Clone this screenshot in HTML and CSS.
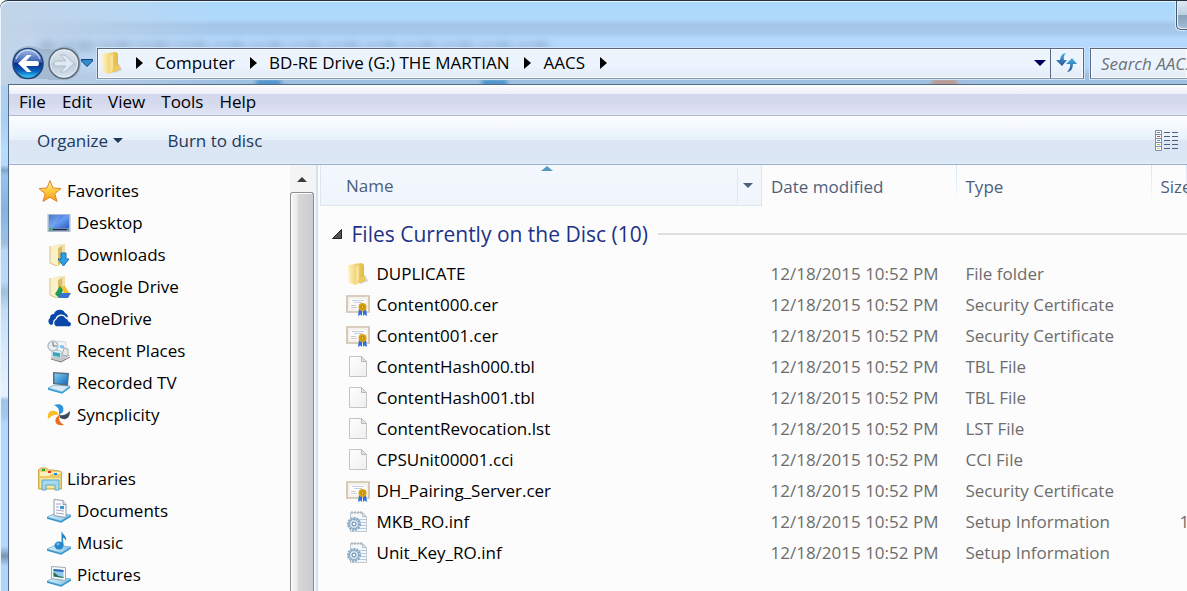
FILE: index.html
```html
<!DOCTYPE html>
<html lang="en">
<head>
<meta charset="utf-8">
<meta name="viewport" content="width=device-width, initial-scale=1">
<title>AACS</title>
<link rel="stylesheet" href="styles.css">
</head>
<body>
<svg class="defs" aria-hidden="true">
  <defs>
    <linearGradient id="gold" x1="0" x2="1"><stop offset="0" stop-color="#fff3bd"/><stop offset="1" stop-color="#ecca62"/></linearGradient>
    <linearGradient id="goldDark" x1="0" x2="1"><stop offset="0" stop-color="#f7df85"/><stop offset="1" stop-color="#e2b840"/></linearGradient>
    <linearGradient id="screen" x1="0" y1="0" x2="1" y2="1"><stop offset="0" stop-color="#2458b8"/><stop offset=".5" stop-color="#6a9df0"/><stop offset="1" stop-color="#2b5fc4"/></linearGradient>
    <linearGradient id="laptopScreen" x1="0" y1="0" x2="1" y2="1"><stop offset="0" stop-color="#7fd0f4"/><stop offset="1" stop-color="#1668bb"/></linearGradient>
    <linearGradient id="tray" x1="0" x2="1"><stop offset="0" stop-color="#d8f0fb"/><stop offset="1" stop-color="#7fc0e6"/></linearGradient>
    <linearGradient id="paper" x1="0" y1="0" x2="1" y2="1"><stop offset="0" stop-color="#ffffff"/><stop offset="1" stop-color="#eeeeee"/></linearGradient>
    <linearGradient id="arrowBlue" x1="0" y1="0" x2="0" y2="1"><stop offset="0" stop-color="#45b4e0"/><stop offset="1" stop-color="#2a4f9c"/></linearGradient>
    <linearGradient id="starFill" x1="0" y1="0" x2="0" y2="1"><stop offset="0" stop-color="#fff2a0"/><stop offset=".5" stop-color="#ffc93c"/><stop offset="1" stop-color="#f59a1c"/></linearGradient>
    <linearGradient id="backFill" x1="0" y1="0" x2="0" y2="1"><stop offset="0" stop-color="#a9bfe6"/><stop offset=".45" stop-color="#3a62b4"/><stop offset=".5" stop-color="#08308c"/><stop offset=".75" stop-color="#0b62bd"/><stop offset="1" stop-color="#3bdcff"/></linearGradient>
    <linearGradient id="fwdFill" x1="0" y1="0" x2="0" y2="1"><stop offset="0" stop-color="#dce4ec"/><stop offset=".48" stop-color="#cad5e0"/><stop offset=".5" stop-color="#bccad8"/><stop offset="1" stop-color="#d6e2ee"/></linearGradient>
  </defs>
  <symbol id="i-folder" viewBox="0 0 24 24">
    <path d="M14 22l8-3-3-6-5 1z" fill="#a9adb4" opacity=".55"/>
    <path d="M7 2l9-1 2 2v16l-7 3-4-2z" fill="url(#goldDark)"/>
    <path d="M2 3l8-1 3 2v14l-3 5-7-2z" fill="url(#gold)"/>
    <path d="M10 5l3-2v15l-3 5z" fill="#f8e293"/>
    <path d="M14 15l5-1v5l-5 2z" fill="#edc95a"/>
  </symbol>
  <symbol id="i-folder-pale" viewBox="0 0 24 24">
    <path d="M8 2l10-1v17l-7 5z" fill="#efdfa6"/>
    <path d="M3 3l9-1 2 2v15l-3 4-7-3z" fill="#fbf1c7"/>
    <path d="M11 5l4-2v15l-4 5z" fill="#d6bb69"/>
    <path d="M3 3v17l7 3" fill="none" stroke="#d7c27b"/>
  </symbol>
  <symbol id="i-star" viewBox="0 0 24 24">
    <path d="M12 1.500l3 7.500 8 .5-6.200 5.200 2.200 7.800-7-4.300-7 4.300 2.200-7.800L1 9.500 9 9z" fill="url(#starFill)" stroke="#e0852a" stroke-linejoin="round"/>
  </symbol>
  <symbol id="i-desktop" viewBox="0 0 24 24">
    <path d="M.5 3h23v18H.5z" fill="#a9bbd2"/><path d="M2 4h20v13H2z" fill="url(#screen)"/>
    <path d="M2 4h12L5 17H2z" fill="#8cb4f5" opacity=".35"/>
    <path d="M2 17h20v3H2z" fill="#7487a3"/><path d="M6 18h14v1H6z" fill="#17284a"/><circle cx="4" cy="18" r="1.500" fill="#4bb26a"/>
  </symbol>
  <symbol id="i-downloads" viewBox="0 0 24 24">
    <use href="#i-folder-pale"/><path d="M14 10h5v6h3l-5.500 7L11 16h3z" fill="#2ea0e2" stroke="#1673b8"/>
  </symbol>
  <symbol id="i-gdrive" viewBox="0 0 24 24">
    <use href="#i-folder-pale"/><path d="M13 11h5l5 8h-5z" fill="#f7c22f"/><path d="M13 11l3 4-4 8L8 19z" fill="#1d9a57"/><path d="M14 18h10l-3 5h-9.500z" fill="#3971d6"/>
  </symbol>
  <symbol id="i-onedrive" viewBox="0 0 24 24">
    <path d="M4 18a4 4 0 0 1-1-7 4 4 0 0 1 4-4 6 6 0 0 1 11-1 5 5 0 0 1 3 4z" fill="#0a47a9"/>
    <path d="M9 20a4.500 4.500 0 0 1 0-8 5.500 5.500 0 0 1 10-1 4 4 0 0 1 3 3 3 3 0 0 1-1 6z" fill="#0a47a9" stroke="#fcfcfc" stroke-width="1.300"/>
  </symbol>
  <symbol id="i-recent" viewBox="0 0 24 24">
    <path d="M3 19l8-4 12 1-8 7z" fill="#c3c7ca"/><path d="M4 20l10 3 9-5" stroke="#777e84" fill="none"/>
    <path d="M10 2l9 1v12l-9-1z" fill="#f4f5f6" stroke="#d3d8db"/>
    <path d="M5 11l9 1v7l-9-1z" fill="#eaf6fb" stroke="#b0c4ce"/><path d="M6 13l7 1v4l-7-1z" fill="#3da5bd"/>
    <path d="M17 9l4 1v7l-6-1z" fill="#e6e8ea" stroke="#a6acb0"/><path d="M13 6l4 .5v3l-4-.5z" fill="#7ec6e9"/>
    <circle cx="6" cy="7" r="5" fill="#e9eef0" stroke="#b8c0c5" stroke-width="1.500"/><path d="M6 3v4h4" stroke="#67757e" fill="none"/>
  </symbol>
  <symbol id="i-laptop" viewBox="0 0 24 24">
    <path d="M1 17l6-3 16 1-8 6z" fill="#d8eaf5" stroke="#8bb5cf"/><path d="M1 18l14 4 8-6" fill="none" stroke="#2d9bd6" stroke-width="1.500"/>
    <path d="M6 1l16 1-1 13-15-2z" fill="#5a6d7d"/><path d="M7.500 2.500l13 1-1 10-12-1.500z" fill="url(#laptopScreen)"/>
  </symbol>
  <symbol id="i-sync" viewBox="0 0 24 24">
    <path d="M7 2c6-2 11 0 9 7l-4 3c0-4 1-7-5-10z" fill="#2d93dd"/>
    <path d="M23 8c0 7-4 10-10 7l-1-3c4 1 7 0 11-4z" fill="#3a4b5b"/>
    <path d="M17 22c-7 1-10-2-8-7l3-3c0 4 0 7 5 10z" fill="#e86f22"/>
    <path d="M1 16c-1-7 3-10 9-7l2 3c-4-1-7 0-11 4z" fill="#fbbc25"/>
  </symbol>
  <symbol id="i-libraries" viewBox="0 0 24 24">
    <path d="M.5 3l2-2h6l2 2h4l7 1 2 1v17H.5z" fill="#ecd275" stroke="#cba84a"/>
    <path d="M2 5h20v4H2z" fill="#fbefbd"/><path d="M2 9h9l2-2h9v4H2z" fill="#e8ca66"/><path d="M2 11h20v10H2z" fill="#f9e497"/>
    <path d="M4 2h3v2H4z" fill="#29a33d"/><path d="M10 4h3v2h-3z" fill="#e03227"/><path d="M16 6h3v2h-3z" fill="#2487dd"/>
    <path d="M4 13h17v10h-4v-5H8v5H4z" fill="#a4d9ee" stroke="#5ba9ca"/>
  </symbol>
  <symbol id="i-tray" viewBox="0 0 24 24">
    <path d="M0 18l9-4 15 2-10 6z" fill="url(#tray)" stroke="#83bddd"/><path d="M0 19l14 4L24 17" fill="none" stroke="#3393cb" stroke-width="1.500"/>
  </symbol>
  <symbol id="i-documents" viewBox="0 0 24 24">
    <use href="#i-tray"/><path d="M7 .5l9 1 3 4v13l-12-2z" fill="#fbfcff" stroke="#929cad"/><path d="M16 1.500v4h3" fill="#dfe5ee" stroke="#929cad"/>
    <path d="M9 5h5M9 8h3M9 11l8 1M9 14l8 1" stroke="#a9a3c4"/><path d="M13 7h4v3h-4z" fill="#3c98cf"/>
  </symbol>
  <symbol id="i-music" viewBox="0 0 24 24">
    <use href="#i-tray"/><path d="M14.500 0c1 4 6 5 4.500 10-1-3-2-3-3-3l.5 8h-2z" fill="#2686c9"/><ellipse cx="12" cy="14.500" rx="4.500" ry="4" fill="#2686c9"/><circle cx="11" cy="13" r="1.500" fill="#72bee9"/>
  </symbol>
  <symbol id="i-pictures" viewBox="0 0 24 24">
    <use href="#i-tray"/><path d="M4.500 3.500l14 1v13l-14-2z" fill="#f7fafc" stroke="#9fa9b2"/><path d="M6.500 6l10 1v8l-10-1.500z" fill="#8fcaee"/><path d="M6.500 9l5 4 5 1v1l-10-1.500z" fill="#296b53"/><path d="M6.500 6l10 1v2l-10-1z" fill="#2b66ac"/>
  </symbol>
  <symbol id="i-cert" viewBox="0 0 24 24">
    <path d="M1 3h22v16H1z" fill="#fff" stroke="#cdbda6" stroke-width="1.600"/><path d="M3 5h18v12H3z" fill="#fdfdfd" stroke="#e9e2d7"/>
    <path d="M6 7.500h12M8 9.500h8" stroke="#c6cce4"/><path d="M5 12.500h5M5 14.500h6" stroke="#c9c9d0"/>
    <path d="M13 16l-1 7 2.500-1.500L16 23V17zM20 16l1 7-2.500-1.500L17 23V17z" fill="#2d6fe0"/><circle cx="16.500" cy="14" r="4" fill="#dba10f"/><circle cx="16.500" cy="14" r="1.500" fill="#f4d259" stroke="#a87404"/>
  </symbol>
  <symbol id="i-file" viewBox="0 0 24 24">
    <path d="M3.500 1.500h12l5 5v15h-17z" fill="url(#paper)" stroke="#c4c4c4"/><path d="M15.500 1.500v5h5z" fill="#e3e3e3" stroke="#b8b8b8"/>
  </symbol>
  <symbol id="i-inf" viewBox="0 0 24 24">
    <path d="M4.500 2.500h12l4 4v15h-16z" fill="#f4f8fa" stroke="#c3cacf"/><path d="M16.500 2.500v4h4z" fill="#e1e6ea" stroke="#b6bec4"/><path d="M6 1v3M9 1v3M12 1v3M15 1v3" stroke="#a0aab2"/>
    <path d="M12 9.500h8M14 12.500h6M14 15.500h6M12 18.500h8" stroke="#b3cbdc"/>
    <circle cx="8" cy="14" r="6" fill="#c2daea" stroke="#86a6c0" stroke-width="2" stroke-dasharray="2 1"/><circle cx="8" cy="14" r="4.500" fill="#dcebf5" stroke="#7fa5c3"/><circle cx="8" cy="14" r="2" fill="#fff" stroke="#567fa4"/>
  </symbol>
</svg>

<div class="window">
  <button class="caption-button" aria-label="Minimize"></button>
  <div class="glass-shapes" aria-hidden="true"><i></i><i></i><i></i><i></i></div>
  <header class="address-row">
    <div class="history">
      <button class="history-button" aria-label="Back">
        <svg width="36" height="36" viewBox="0 0 36 36"><path d="M2 9Q7 1 17 1q8 0 12 3h7v30H8Q-1 27 2 9z" fill="#93abc4" opacity=".6"/><circle cx="16" cy="18.500" r="15" fill="url(#backFill)" stroke="#234276" stroke-width="1.500"/><path d="M4 14a12.500 12.500 0 0 1 24 0" fill="none" stroke="#d7e5fa" stroke-width="1.500" opacity=".75"/><path d="M6 18.500l9-8.500h4.500l-5.500 6h11q2 0 2 2.500T25 21H14l5.500 6H15z" fill="#fff"/></svg>
      </button>
      <button class="history-button" aria-label="Forward">
        <svg width="34" height="36" viewBox="0 0 34 36"><path d="M0 4q6 1 12-2 18-4 21 16 0 14-14 17H0z" fill="#93abc4" opacity=".6"/><circle cx="16" cy="18.500" r="15" fill="url(#fwdFill)" stroke="#5f6b78" stroke-width="1.500"/><circle cx="16" cy="18.500" r="13.500" fill="none" stroke="#edf3f8" opacity=".8"/><path d="M26 18.500L17 10h-4.500l5.500 6H8q-2 0-2 2.500T8 21h10l-5.500 6H17z" fill="#dfe9f3" stroke="#aebccb"/></svg>
      </button>
      <button class="recent-pages" aria-label="Recent pages">
        <svg width="12" height="8" viewBox="0 0 12 8"><path d="M.5.500h11v1.500L6 7.500.5 2z" fill="#2e8fd0" stroke="#123f7c"/></svg>
      </button>
    </div>
    <nav class="address-bar" aria-label="Address">
      <svg class="icon" aria-hidden="true"><use href="#i-folder"/></svg>
      <span class="crumb-arrow"></span><a href="#computer">Computer</a>
      <span class="crumb-arrow"></span><a href="#drive">BD-RE Drive (G:) THE MARTIAN</a>
      <span class="crumb-arrow"></span><a href="#aacs">AACS</a>
      <span class="crumb-arrow"></span>
      <button class="address-drop" aria-label="Previous locations"><span class="triangle"></span></button>
      <button class="refresh" aria-label="Refresh">
        <svg width="22" height="22" viewBox="0 0 22 22"><path d="M10 1Q5 1 4 8H0l6 6 5-6H8q-1-4 2-7z" fill="url(#arrowBlue)"/><path d="M11 20q6-1 6-8h4l-5-6-6 6h4q1 4-3 8z" fill="url(#arrowBlue)"/></svg>
      </button>
    </nav>
    <input class="search" type="search" placeholder="Search AACS" aria-label="Search AACS">
  </header>

  <div class="client">
    <nav class="menu-bar" aria-label="Menu">
      <button>File</button><button>Edit</button><button>View</button><button>Tools</button><button>Help</button>
    </nav>
    <div class="command-bar">
      <button>Organize <span class="triangle small"></span></button>
      <button>Burn to disc</button>
      <button class="view-button" aria-label="Change your view">
        <svg width="24" height="22" viewBox="0 0 24 22"><path d="M.5.500h6v20h-6z" fill="#fff" stroke="#7d8ea8"/><path d="M1 4.500h5M1 8.500h5M1 12.500h5M1 16.500h5" stroke="#7d8ea8"/><path d="M2 2.500h3" stroke="#5d9c6d"/><path d="M2 6.500h3" stroke="#e2442c"/><path d="M2 10.500h3" stroke="#4d95dd"/><path d="M2 14.500h3" stroke="#94b93b"/><path d="M2 18.500h3" stroke="#e2cb3a"/><path d="M9 2.500h6m2 0h6M9 6.500h6m2 0h6M9 10.500h6m2 0h6M9 14.500h6m2 0h6M9 18.500h6m2 0h6" stroke="#4d5f7c"/></svg>
      </button>
    </div>

    <div class="panes">
      <nav class="sidebar" aria-label="Folders">
        <section>
          <a class="root" href="#favorites"><svg class="icon"><use href="#i-star"/></svg>Favorites</a>
          <ul>
            <li><a href="#desktop"><svg class="icon"><use href="#i-desktop"/></svg>Desktop</a></li>
            <li><a href="#downloads"><svg class="icon"><use href="#i-downloads"/></svg>Downloads</a></li>
            <li><a href="#google-drive"><svg class="icon"><use href="#i-gdrive"/></svg>Google Drive</a></li>
            <li><a href="#onedrive"><svg class="icon"><use href="#i-onedrive"/></svg>OneDrive</a></li>
            <li><a href="#recent"><svg class="icon"><use href="#i-recent"/></svg>Recent Places</a></li>
            <li><a href="#recorded-tv"><svg class="icon"><use href="#i-laptop"/></svg>Recorded TV</a></li>
            <li><a href="#syncplicity"><svg class="icon"><use href="#i-sync"/></svg>Syncplicity</a></li>
          </ul>
        </section>
        <section>
          <a class="root" href="#libraries"><svg class="icon"><use href="#i-libraries"/></svg>Libraries</a>
          <ul>
            <li><a href="#documents"><svg class="icon"><use href="#i-documents"/></svg>Documents</a></li>
            <li><a href="#music"><svg class="icon"><use href="#i-music"/></svg>Music</a></li>
            <li><a href="#pictures"><svg class="icon"><use href="#i-pictures"/></svg>Pictures</a></li>
          </ul>
        </section>
      </nav>
      <div class="scrollbar" aria-hidden="true"><span class="scroll-up"></span><span class="thumb"></span></div>
      <main class="files">
        <table>
          <colgroup><col class="col-name"><col class="col-date"><col class="col-type"><col></colgroup>
          <thead>
            <tr>
              <th class="sorted" aria-sort="ascending"><div class="sorted-head"><span class="sort-mark"></span><button class="sort">Name</button><button class="filter" aria-label="Filter by name"><span class="triangle small"></span></button></div></th>
              <th><button class="sort">Date modified</button></th>
              <th><button class="sort">Type</button></th>
              <th><button class="sort">Size</button></th>
            </tr>
          </thead>
          <tbody>
            <tr class="group"><th colspan="4"><div class="group-head"><svg width="10" height="10" viewBox="0 0 10 10" aria-hidden="true"><path d="M9.500.500v9H.5z" fill="#555" stroke="#222"/></svg><span>Files Currently on the Disc (10)</span></div></th></tr>
            <tr><td><a href="#f0"><svg class="icon"><use href="#i-folder"/></svg>DUPLICATE</a></td><td>12/18/2015 10:52 PM</td><td>File folder</td><td></td></tr>
            <tr><td><a href="#f1"><svg class="icon"><use href="#i-cert"/></svg>Content000.cer</a></td><td>12/18/2015 10:52 PM</td><td>Security Certificate</td><td></td></tr>
            <tr><td><a href="#f2"><svg class="icon"><use href="#i-cert"/></svg>Content001.cer</a></td><td>12/18/2015 10:52 PM</td><td>Security Certificate</td><td></td></tr>
            <tr><td><a href="#f3"><svg class="icon"><use href="#i-file"/></svg>ContentHash000.tbl</a></td><td>12/18/2015 10:52 PM</td><td>TBL File</td><td></td></tr>
            <tr><td><a href="#f4"><svg class="icon"><use href="#i-file"/></svg>ContentHash001.tbl</a></td><td>12/18/2015 10:52 PM</td><td>TBL File</td><td></td></tr>
            <tr><td><a href="#f5"><svg class="icon"><use href="#i-file"/></svg>ContentRevocation.lst</a></td><td>12/18/2015 10:52 PM</td><td>LST File</td><td></td></tr>
            <tr><td><a href="#f6"><svg class="icon"><use href="#i-file"/></svg>CPSUnit00001.cci</a></td><td>12/18/2015 10:52 PM</td><td>CCI File</td><td></td></tr>
            <tr><td><a href="#f7"><svg class="icon"><use href="#i-cert"/></svg>DH_Pairing_Server.cer</a></td><td>12/18/2015 10:52 PM</td><td>Security Certificate</td><td></td></tr>
            <tr><td><a href="#f8"><svg class="icon"><use href="#i-inf"/></svg>MKB_RO.inf</a></td><td>12/18/2015 10:52 PM</td><td>Setup Information</td><td class="size">1</td></tr>
            <tr><td><a href="#f9"><svg class="icon"><use href="#i-inf"/></svg>Unit_Key_RO.inf</a></td><td>12/18/2015 10:52 PM</td><td>Setup Information</td><td></td></tr>
          </tbody>
        </table>
      </main>
    </div>
  </div>
</div>
</body>
</html>
```

FILE: styles.css
```css
* { box-sizing: border-box; }

body {
  margin: 0;
  overflow: hidden;
  font: 17px/24px "Open Sans", "Noto Sans", sans-serif;
  color: #000;
}

button {
  font: inherit;
  color: inherit;
  background: none;
  border: 0;
  padding: 0;
  margin: 0;
}

a { color: inherit; text-decoration: none; }
svg { display: block; flex: none; }
.defs { position: absolute; width: 0; height: 0; }
.icon { width: 24px; height: 24px; }

.window {
  position: relative;
  display: flex;
  flex-direction: column;
  min-height: 100vh;
  padding-left: 8px;
  border-top: 1px solid #26303e;
  border-top-left-radius: 8px;
  box-shadow: inset 1px 1px 0 #e8f5ff;
  background:
    linear-gradient(90deg, #c3d4e8 0, #c3d4e800 220px) 0 0 / 100% 84px no-repeat,
    linear-gradient(#aad9fb 0, #b1d9fc 18px, #a3c5e7 24px, #a6caec 32px, #b6daff 38px, #b4d8fd 66px, #9fc0e1 74px, #9fc0e1 84px) 0 0 / 100% 84px no-repeat,
    linear-gradient(#b2cfee 84px, #a9cff5 120px, #b8dcff 150px, #b4daff 164px, #7ea4c9 169px, #96c4ef 175px, #86b2dd 210px, #93bfe9 232px, #9fbddb 242px, #bad6f2 250px, #bdd9f5 280px, #a3bfd8 290px, #c4ddf5 310px, #d8eafa 350px, #e8f2fc 395px, #9fc4ea 399px, #a2c8ee 415px, #b3d8ff 422px, #b3d8ff 545px, #7794b3 555px, #b0d5fb 565px, #b0d5fb);
}

/* Blurred colours of the desktop seen through the glass */
.glass-shapes i {
  position: absolute;
  top: 79px;
  left: 256px;
  width: 25px;
  height: 6px;
  background: #3f8cc9;
  filter: blur(2px);
}
.glass-shapes i:nth-child(2) { left: 482px; }
.glass-shapes i:nth-child(3) { left: 932px; background: #c2917a; }
.glass-shapes i:nth-child(4) {
  top: 41px;
  left: 40px;
  width: 510px;
  height: 8px;
  background: repeating-linear-gradient(90deg, #6c87a6 0 11px, #a9c4e0 17px 20px, #7d98b7 26px 31px, #b6d3f0 38px);
  opacity: .5;
  filter: blur(4px);
}

.caption-button {
  position: absolute;
  top: 0;
  right: 0;
  width: 11px;
  height: 29px;
  border: 1px solid #46566b;
  border-width: 0 0 1px 1px;
  border-bottom-left-radius: 5px;
  background: linear-gradient(#dce9f4, #bccfdf 50%, #86a3bf 51%, #a5bed4);
  box-shadow: inset 1px -1px #e7f2fb, -1px 1px #d6ebfb;
}

.address-row {
  position: relative;
  display: flex;
  align-items: center;
  padding: 44px 0 3px 4px;
}

.history { display: flex; align-items: center; width: 85px; }
.recent-pages { margin-left: -1px; }

.address-bar, .search {
  height: 31px;
  border: 1px solid #596a80;
  border-bottom-color: #8798ac;
  background: linear-gradient(#edf3fb, #ebf4ff 60%, #e3eaf3);
  box-shadow: inset 0 0 0 1px #f8fbff, 0 0 0 1px #cfe4f9;
}

.address-bar {
  display: flex;
  align-items: center;
  flex: 1;
  min-width: 0;
  padding-left: 2px;
  white-space: nowrap;
}

.crumb-arrow {
  width: 0;
  border: solid transparent;
  border-width: 6px 0 6px 7px;
  border-left-color: #000;
  margin: 0 12px 0 15px;
}
.address-bar .icon + .crumb-arrow { margin-left: 12px; }

.triangle {
  display: inline-block;
  border: solid transparent;
  border-width: 6px 6px 0;
  border-top-color: currentColor;
}
.triangle.small { border-width: 5px 5px 0; vertical-align: 4px; }

.address-drop { display: flex; margin-left: auto; color: #00005b; }
.refresh {
  display: grid;
  place-items: center;
  align-self: stretch;
  width: 33px;
  margin-left: 4px;
  border-left: 1px solid #596a80;
}

.search {
  flex: none;
  width: 97px;
  margin-left: 6px;
  padding: 0 0 0 10px;
  border-right: 0;
  border-radius: 0;
  outline: 0;
  appearance: none;
  font: italic 17px/24px "Open Sans", "Noto Sans", sans-serif;
}
.search::placeholder { color: #6d7178; opacity: 1; }
.search::-webkit-search-cancel-button { display: none; }

.client {
  position: relative;
  display: flex;
  flex-direction: column;
  flex: 1;
  border: solid #536986;
  border-width: 1px 0 0 1px;
  background: #fcfcfc;
}

.menu-bar {
  display: flex;
  align-items: center;
  gap: 16px;
  height: 31px;
  padding: 3px 10px 0;
  border-bottom: 1px solid #b3b8cf;
  background: linear-gradient(#fff, #eceef8 9px, #d4d8ec 9px, #d5d9ed 18px, #e1e6f6);
}

.command-bar {
  display: flex;
  align-items: center;
  gap: 45px;
  height: 49px;
  padding: 1px 8px 0 28px;
  border-bottom: 1px solid #9bb0cc;
  background: linear-gradient(#fdfeff, #e7f1fb 24px, #dce6f4 24px, #dbe7f5 46px, #e5effa);
  color: #1e395b;
}
.view-button { margin-left: auto; }

.panes { display: flex; flex: 1; }

.sidebar { width: 281px; flex: none; padding-top: 10px; }
.sidebar section { padding-bottom: 32px; }
.sidebar section:last-child { padding-bottom: 0; }
.sidebar ul { list-style: none; margin: 0; padding: 0; }
.sidebar a { display: flex; align-items: center; gap: 6px; height: 32px; padding-left: 38px; }
.sidebar .root { gap: 5px; padding-left: 29px; }

.scrollbar {
  display: flex;
  flex-direction: column;
  flex: none;
  width: 28px;
  border-right: 2px solid #d2e2f5;
  padding-right: 2px;
  background: #f4f4f4;
}
.scroll-up {
  align-self: center;
  margin: 12px 0 10px;
  border: solid transparent;
  border-width: 0 5px 5px;
  border-bottom-color: #3c3c3c;
}
.thumb {
  flex: 1;
  border: 1px solid #8f8f8f;
  border-bottom: 0;
  border-radius: 3px 3px 0 0;
  background: linear-gradient(90deg, #f6f6f6, #ececec 25%, #d5d7d9 35%, #cacccf);
  box-shadow: inset 1px 1px #fff;
}

.files { flex: 1; min-width: 0; padding-left: 2px; overflow: hidden; }
table { width: 100%; table-layout: fixed; border-collapse: collapse; }
.col-name { width: 441px; }
.col-date, .col-type { width: 195px; }
th, td { padding: 0; text-align: left; font-weight: 400; white-space: nowrap; overflow: hidden; }
thead th {
  height: 40px;
  padding: 3px 0 0 9px;
  color: #4c607a;
  background: linear-gradient(#dae7f5, #e5effa 60%, #fcfcfc) right 0 top 0 / 1px 36px no-repeat;
}
thead .sorted { padding: 0; background: linear-gradient(#f3f8fd, #eff5fb); border: 1px solid #dce6f0; border-top: 0; }
.sorted-head { position: relative; display: flex; align-items: stretch; height: 39px; padding: 3px 0 0 25px; }
.sort-mark {
  position: absolute;
  top: 1px;
  left: 50%;
  border: solid transparent;
  border-width: 0 6px 5px;
  border-bottom-color: #559bc0;
}
.filter { width: 24px; margin-left: auto; padding-right: 4px; border-left: 1px solid #dce7f2; }

.group th { height: 53px; padding: 4px 0 0 11px; }
.group-head { display: flex; align-items: center; gap: 10px; font-size: 21px; line-height: 28px; color: #1e3287; }
.group-head::after { content: ""; flex: 1; height: 2px; background: #dfdfdf; }

td { height: 31px; padding-left: 9px; color: #6d6d6d; }
td:first-child { padding-left: 25px; color: #000; }
td a { display: flex; align-items: center; gap: 7px; }
.size { padding-left: 28px; }
```
